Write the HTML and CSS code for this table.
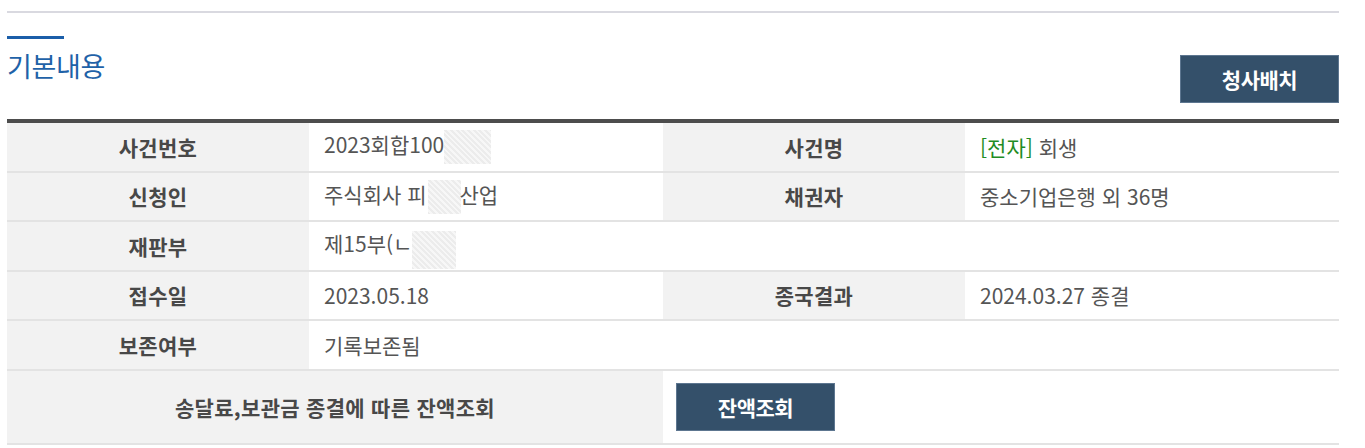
FILE: index.html
```html
<!DOCTYPE html>
<html lang="ko">
<head>
<meta charset="utf-8">
<link rel="stylesheet" href="styles.css">
</head>
<body>
<div class="page">
  <div class="topline"></div>
  <div class="section-head">
    <div class="title-wrap">
      <div class="title-bar"></div>
      <h2 class="title">기본내용</h2>
    </div>
    <button class="btn btn-head" type="button">청사배치</button>
  </div>
  <table class="info">
    <colgroup>
      <col class="c-label"><col class="c-value"><col class="c-label"><col class="c-value2">
    </colgroup>
    <tbody>
      <tr>
        <th>사건번호</th>
        <td>2023회합100<span class="mask mask-a"></span></td>
        <th>사건명</th>
        <td><span class="green">[전자]</span> 회생</td>
      </tr>
      <tr>
        <th>신청인</th>
        <td>주식회사 피<span class="mask mask-b"></span>산업</td>
        <th>채권자</th>
        <td>중소기업은행 외 36명</td>
      </tr>
      <tr>
        <th>재판부</th>
        <td>제15부(ㄴ<span class="mask mask-c"></span></td>
        <td class="blank"></td>
        <td class="blank"></td>
      </tr>
      <tr>
        <th>접수일</th>
        <td>2023.05.18</td>
        <th>종국결과</th>
        <td>2024.03.27 종결</td>
      </tr>
      <tr>
        <th>보존여부</th>
        <td>기록보존됨</td>
        <td class="blank"></td>
        <td class="blank"></td>
      </tr>
      <tr class="last">
        <th colspan="2">송달료,보관금 종결에 따른 잔액조회</th>
        <td colspan="2" class="btn-cell"><button class="btn" type="button">잔액조회</button></td>
      </tr>
    </tbody>
  </table>
</div>
</body>
</html>
```

FILE: styles.css
```css
* { box-sizing: border-box; }
html, body { margin: 0; padding: 0; background: #fff; }
body {
  font-family: "Noto Sans CJK KR", "Noto Sans", sans-serif;
  color: #555;
}
.page {
  width: 1339px;
  padding: 11px 0 0 7px;
}
.topline {
  height: 2px;
  background: #d9d9e0;
}
.section-head {
  display: flex;
  justify-content: space-between;
  align-items: flex-start;
  margin-top: 23px;
}
.title-bar {
  width: 57px;
  height: 3px;
  background: #1b5ea9;
}
.title {
  margin: 9px 0 0;
  font-size: 27px;
  line-height: 36px;
  font-weight: 400;
  color: #1f62a8;
  letter-spacing: -0.3px;
}
.btn {
  width: 159px;
  height: 48px;
  background: #34506a;
  border: 1px solid #5d7690;
  color: #fff;
  font-family: inherit;
  font-size: 21px;
  font-weight: 700;
  letter-spacing: -0.5px;
  padding: 0;
}
.btn-head {
  margin-top: 19px;
}
.info {
  margin-top: 16px;
  width: 1332px;
  border-collapse: separate;
  border-spacing: 0;
  border-top: 4px solid #4d4d4d;
  table-layout: fixed;
}
.c-label { width: 302px; }
.c-value { width: 354px; }
.c-value2 { width: 374px; }
.info th, .info td {
  height: 49.5px;
  border-bottom: 2px solid #e3e3e3;
  font-size: 21px;
  padding: 0;
  vertical-align: middle;
  white-space: nowrap;
}
.info th {
  background: #f2f2f2;
  color: #484848;
  font-weight: 700;
  text-align: center;
  letter-spacing: 0.3px;
}
.info td {
  padding-left: 15px;
  color: #555;
  font-size: 21px;
  letter-spacing: 0;
}
.info td.blank { padding: 0; }
.info tr.last th, .info tr.last td { height: 74.5px; }
.info td.btn-cell { padding-left: 13px; }
.green { color: #1f8c24; }
.mask {
  display: inline-block;
  vertical-align: middle;
  height: 34px;
  background: repeating-linear-gradient(45deg, #ececec 0 2px, #f7f7f7 2px 4px);
}
.mask-a { width: 47px; }
.mask-b { width: 33px; margin: 0 -2px 0 2px; }
.mask-c { width: 44px; height: 38px; margin-top: 8px; }
```
